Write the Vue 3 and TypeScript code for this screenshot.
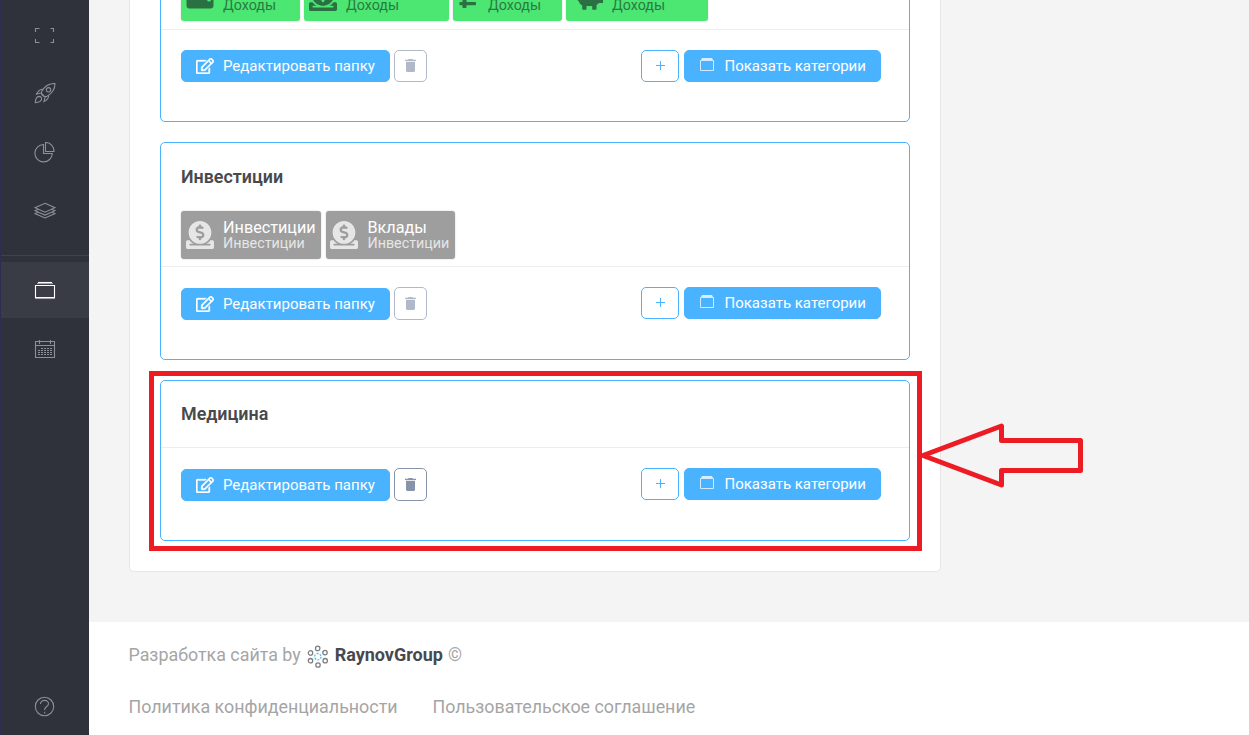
<script setup lang="ts">
interface Chip {
  title?: string
  group: string
  icon: 'wallet' | 'donate' | 'ruble' | 'piggy'
  width: number
}

interface Folder {
  id: string
  title?: string
  tone: 'green' | 'gray'
  chips: Chip[]
}

const folders: Folder[] = [
  {
    id: 'income',
    tone: 'green',
    chips: [
      { group: 'Доходы', icon: 'wallet', width: 119 },
      { group: 'Доходы', icon: 'donate', width: 145 },
      { group: 'Доходы', icon: 'ruble', width: 109 },
      { group: 'Доходы', icon: 'piggy', width: 142 },
    ],
  },
  {
    id: 'invest',
    title: 'Инвестиции',
    tone: 'gray',
    chips: [
      { title: 'Инвестиции', group: 'Инвестиции', icon: 'donate', width: 140 },
      { title: 'Вклады', group: 'Инвестиции', icon: 'donate', width: 129 },
    ],
  },
  { id: 'medicine', title: 'Медицина', tone: 'gray', chips: [] },
]

const donatePath =
  'M256 416c114.9 0 208-93.1 208-208S370.9 0 256 0 48 93.1 48 208s93.1 208 208 208zM233.8 97.4V80.6c0-9.2 7.4-16.6 16.6-16.6h11.1c9.2 0 16.6 7.4 16.6 16.6v17c15.5.8 30.5 6.1 43 15.4 5.6 4.1 6.2 12.3 1.2 17.1L306 145.6c-3.8 3.7-9.5 3.8-14 1-5.4-3.4-11.4-5.1-17.8-5.1h-38.9c-9 0-16.3 8.2-16.3 18.3 0 8.2 5 15.5 12.1 17.6l62.3 18.7c25.7 7.7 43.7 32.4 43.7 60.1 0 34-26.4 61.5-59.1 62.4v16.8c0 9.2-7.4 16.6-16.6 16.6h-11.1c-9.2 0-16.6-7.4-16.6-16.6v-17c-15.5-.8-30.5-6.1-43-15.4-5.6-4.1-6.2-12.3-1.2-17.1l16.3-15.5c3.8-3.7 9.5-3.8 14-1 5.4 3.4 11.4 5.1 17.8 5.1h38.9c9 0 16.3-8.2 16.3-18.3 0-8.2-5-15.5-12.1-17.6l-62.3-18.7c-25.7-7.7-43.7-32.4-43.7-60.1.1-34 26.4-61.5 59.1-62.4zM480 352h-32.500c-19.600 26-44.600 47.700-73 64h63.800c5.300 0 9.600 3.600 9.600 8v16c0 4.400-4.300 8-9.600 8H73.600c-5.300 0-9.600-3.600-9.600-8v-16c0-4.400 4.300-8 9.600-8h63.800c-28.400-16.300-53.300-38-73-64H32c-17.700 0-32 12.500-32 28v104c0 15.500 14.300 28 32 28h448c17.700 0 32-12.500 32-28V380c0-15.500-14.300-28-32-28z'
const editPath =
  'M402.3 344.9l32-32c5-5 13.7-1.5 13.7 5.7V464c0 26.5-21.5 48-48 48H48c-26.5 0-48-21.5-48-48V112c0-26.5 21.5-48 48-48h273.5c7.1 0 10.7 8.6 5.7 13.7l-32 32c-1.5 1.5-3.5 2.3-5.7 2.3H48v352h352V350.5c0-2.1.8-4.1 2.3-5.6zm156.6-201.8L296.3 405.7l-90.4 10c-26.2 2.9-48.5-19.2-45.6-45.6l10-90.4L432.9 17.1c22.9-22.9 59.9-22.9 82.7 0l43.2 43.2c22.9 22.9 22.9 60 .1 82.8zM460.1 174L402 115.9 216.2 301.8l-7.3 65.3 65.3-7.3L460.1 174zm64.8-79.7l-43.2-43.2c-4.1-4.1-10.8-4.1-14.8 0L436 82l58.1 58.1 30.9-30.9c4-4.2 4-10.8-.1-14.9z'
</script>

<template>
  <div class="app">
    <nav class="sidebar">
      <a class="nav-item">
        <svg width="22" height="22" viewBox="0 0 22 22">
          <path d="M1.500 8V4.500H5.500M16.500 4.500H19.500V8M1.500 15V18.500H5.500M16.500 18.500H19.500V15" />
        </svg>
      </a>
      <a class="nav-item">
        <svg width="22" height="22" viewBox="0 1 22 22">
          <path d="M21 1.500C14 1.500 10.500 4 7.800 9.300C7.300 10.500 7.400 11.300 8 12L10.200 14.200C11 14.800 11.800 14.800 12.600 14.400C18 11.500 21 8 21 1.500Z" />
          <circle cx="14.500" cy="7.800" r="2.200" />
          <path d="M8.800 7.200C5.500 7.200 4 9 2.400 12.200L7.600 10.800M14.800 13.200C14.800 16.500 13 18 10 19.600L11.200 14.600M7.400 12C8 12.900 9 14 10.200 14.600" />
          <path d="M1.300 20.700C1.500 17.500 2.200 14.500 5 14.400C7 14.400 8 15.800 7.600 17.200C7 19.800 4.300 20.600 1.300 20.700Z" />
        </svg>
      </a>
      <a class="nav-item">
        <svg width="22" height="22" viewBox="0 1 22 22">
          <path d="M9.500 3.500V12.500H18.300A8.700 8.700 0 1 1 9.500 3.500Z" />
          <path d="M11.500 1.500V10.500H20A8.500 8.700 0 0 0 11.500 1.500Z" />
        </svg>
      </a>
      <a class="nav-item">
        <svg width="22" height="22" viewBox="0 1 22 22">
          <path d="M11 3.300L21 7.700L11 12.200L1 7.700ZM4 9.400L1 10.700L11 15.100L21 10.700L18 9.400M4 12.300L1 13.600L11 18L21 13.600L18 12.300" />
        </svg>
      </a>
      <div class="nav-rule"></div>
      <a class="nav-item active">
        <svg width="22" height="22" viewBox="0 0 22 22">
          <path d="M4 3.500H18" />
          <path class="soft" d="M3 4.500H19" />
          <path d="M1.500 6.500H20.500V18.500H1.500Z" />
          <path class="soft" d="M1 19.500H21" />
        </svg>
      </a>
      <a class="nav-item">
        <svg width="22" height="22" viewBox="0 0 22 22">
          <path d="M1.500 3.500H20.500V19.500H1.500ZM1.500 7.500H20.500M5.500 2V6M16.500 2V6" />
          <path d="M7 10.500H18M4 12.500H18M4 14.500H18M4 16.500H18" stroke-dasharray="2 1" />
        </svg>
      </a>
      <a class="nav-item help">
        <svg width="22" height="22" viewBox="0 0 22 22">
          <circle cx="10.500" cy="11.500" r="9.200" />
          <path d="M6.500 9C6.500 6.600 8.200 5.400 10.600 5.400C13 5.400 14.500 6.700 14.500 8.700C14.500 11.700 10.600 11.400 10.600 14.900M10.600 16.700V18.400" />
        </svg>
      </a>
    </nav>

    <div class="page">
      <main class="content">
        <section class="panel">
          <article v-for="folder in folders" :key="folder.id" class="folder" :class="folder.id">
            <div class="folder-body">
              <h2>{{ folder.title }}</h2>
              <div v-if="folder.chips.length" class="chips" :class="folder.tone">
                <div v-for="(chip, i) in folder.chips" :key="i" class="chip" :style="{ width: chip.width + 'px' }">
                  <svg v-if="chip.icon === 'donate'" class="chip-icon" viewBox="0 0 512 512"><path :d="donatePath" /></svg>
                  <svg v-else-if="chip.icon === 'wallet'" class="chip-icon" viewBox="0 0 28 28">
                    <path fill-rule="evenodd" d="M3 2H23Q25 2 25 5H5V6H25Q27.500 6 27.500 9V22.500Q27.500 25.500 24.500 25.500H3.500Q.5 25.500 .5 22.500V5Q.5 2 3 2ZM23 14.500a2 2 0 1 0 0 4a2 2 0 1 0 0-4Z" />
                  </svg>
                  <svg v-else-if="chip.icon === 'ruble'" class="chip-icon narrow" viewBox="0 0 21 28">
                    <path fill-rule="evenodd" d="M4.500 1H12Q19 1 19 8.500Q19 16 12 16H8.500V19H17Q18 19 18 19.800V21.400Q18 22.200 17 22.200H8.500V24.200Q8.500 25 7.700 25H5.200Q4.400 25 4.400 24.200V22.200H2.200Q1.400 22.200 1.400 21.400V19.800Q1.400 19 2.200 19H4.500ZM8.500 4.500V12.500H12Q15 12.500 15 8.500Q15 4.500 12 4.500Z" />
                  </svg>
                  <svg v-else class="chip-icon wide" viewBox="0 0 32 28">
                    <path d="M14 6H22L27 3V8L30 12H32V20H28L25.500 22V26Q25.500 26.800 24.700 26.800H22Q21.200 26.800 21.200 26V23H15.500V26Q15.500 26.800 14.700 26.800H12Q11.200 26.800 11.200 26V22.500Q8.500 21 7.500 18L4 15L7 12Q8 7 14 6Z" />
                  </svg>
                  <div class="chip-text">
                    <span class="chip-title">{{ chip.title }}</span>
                    <span class="chip-group">{{ chip.group }}</span>
                  </div>
                </div>
              </div>
            </div>
            <div class="folder-actions">
              <button class="btn edit">
                <svg width="18" height="16" viewBox="0 0 576 512"><path :d="editPath" /></svg>
                <span>Редактировать папку</span>
              </button>
              <button class="btn trash" aria-label="Удалить">
                <svg width="11" height="13" viewBox="0 0 11 13">
                  <path d="M3.500 0H7.500L8 .7H11V2H0V.7H3ZM1 2.700H10V11.500Q10 13 8.500 13H2.500Q1 13 1 11.500Z" />
                </svg>
              </button>
              <div class="spacer"></div>
              <button class="btn plus" aria-label="Добавить">
                <svg width="10" height="9" viewBox="0 0 10 9"><path d="M5.500 0V9M1 4.500H10" /></svg>
              </button>
              <button class="btn show">
                <svg width="14" height="14" viewBox="0 0 14 14">
                  <path class="lid" d="M2 0H12L13.500 3H.5Z" />
                  <path class="box" d="M.5 2.500H13.500V12.500H.5Z" />
                </svg>
                <span>Показать категории</span>
              </button>
            </div>
          </article>
        </section>
      </main>

      <footer class="footer">
        <div class="credit">
          <span>Разработка сайта by</span>
          <svg class="brand-logo" width="22" height="24" viewBox="0 0 22 24">
            <g class="ring">
              <circle cx="10.700" cy="3.400" r="2.200" />
              <circle cx="18" cy="7.600" r="2.200" />
              <circle cx="18.200" cy="15.700" r="2.200" />
              <circle cx="11" cy="20" r="2.200" />
              <circle cx="3.500" cy="15.700" r="2.200" />
              <circle cx="3.500" cy="7.900" r="2.200" />
            </g>
            <circle class="core" cx="10.800" cy="11.700" r="3.200" />
          </svg>
          <strong>RaynovGroup</strong>
          <span class="copy">©</span>
        </div>
        <div class="links">
          <a>Политика конфиденциальности</a>
          <a>Пользовательское соглашение</a>
        </div>
      </footer>
    </div>

    <div class="highlight"></div>
    <svg class="arrow" width="166" height="70" viewBox="0 0 166 70">
      <path d="M5 35.500L83.500 6V20.500H162.500V50.500H83.500V65Z" />
    </svg>
  </div>
</template>

<style>
body {
  margin: 0;
  overflow: hidden;
}
</style>

<style scoped>
.app {
  position: relative;
  display: flex;
  width: 1249px;
  height: 735px;
  overflow: hidden;
  background: #f4f4f4;
  font-family: Roboto, "Liberation Sans", sans-serif;
}

.sidebar {
  box-sizing: border-box;
  display: flex;
  flex-direction: column;
  gap: 3px;
  width: 89px;
  height: 735px;
  padding: 7px 0 1px;
  border-left: 1px solid #2d2c53;
  background: #30323b;
}
.nav-item {
  display: flex;
  flex: none;
  align-items: center;
  justify-content: center;
  height: 56px;
}
.nav-item svg {
  fill: none;
  stroke: #8b8f96;
  stroke-width: 1.100;
}
.nav-item.active {
  background: #3a3c45;
}
.nav-item.active svg {
  stroke: #fff;
}
.nav-item .soft {
  stroke: #a5a6ab;
}
.nav-rule {
  height: 1px;
  margin: 12px 0 3px;
  background: #41434b;
}
.nav-item.help {
  margin-top: auto;
}

.page {
  display: flex;
  flex: 1;
  flex-direction: column;
}
.content {
  box-sizing: border-box;
  display: flex;
  flex-direction: column;
  justify-content: flex-end;
  height: 622px;
  padding: 0 0 50px 40px;
}
.panel {
  box-sizing: border-box;
  display: flex;
  flex: none;
  flex-direction: column;
  gap: 20px;
  width: 812px;
  padding: 30px;
  border: 1px solid #e6e6e6;
  border-radius: 5px;
  background: #fff;
}
.folder {
  box-sizing: border-box;
  height: 218px;
  border: 1px solid #4ab3ff;
  border-radius: 5px;
}
.folder.medicine {
  height: 161px;
}
.folder-body {
  box-sizing: border-box;
  height: 124px;
  padding: 22px 20px 0;
  border-bottom: 1px solid #ededed;
}
.income .folder-body {
  height: 125px;
}
.medicine .folder-body {
  height: 67px;
}
h2 {
  height: 24px;
  margin: 0;
  color: #48494d;
  font-size: 17.900px;
  font-weight: 600;
  line-height: 24px;
}
.medicine h2 {
  line-height: 22px;
}
.chips {
  display: flex;
  gap: 4px;
  margin-top: 22px;
}
.chips.gray {
  gap: 5px;
}
.chip {
  box-sizing: border-box;
  display: flex;
  flex: none;
  align-items: center;
  gap: 9.500px;
  height: 48px;
  padding-left: 4.500px;
  border-radius: 3px;
  box-shadow: 0 0 2px rgba(0, 0, 0, 0.2);
}
.green .chip {
  background: #4ce673;
  color: #2b7a42;
}
.gray .chip {
  background: #9e9e9e;
  color: #fff;
}
.gray .chip + .chip {
  padding-left: 4px;
}
.chip-icon {
  flex: none;
  width: 28px;
  height: 28px;
  fill: #e6e6e6;
}
.chip-icon.narrow {
  width: 21px;
}
.chip-icon.wide {
  width: 32px;
}
.green .chip-icon {
  fill: #2a7042;
}
.chip-text {
  display: flex;
  flex-direction: column;
  padding-bottom: 1px;
}
.chip-title {
  height: 17px;
  font-size: 16.200px;
  line-height: 17px;
}
.chip-group {
  height: 15px;
  font-size: 14.300px;
  line-height: 15px;
}
.gray .chip-group {
  color: #e6e6e6;
}

.folder-actions {
  display: flex;
  align-items: flex-start;
  padding: 20px 28px 0 20px;
}
.btn {
  box-sizing: border-box;
  display: flex;
  flex: none;
  align-items: center;
  height: 32px;
  margin: 0;
  padding: 0;
  border: 1px solid #4ab3ff;
  border-radius: 5px;
  background: #4ab3ff;
  color: #fff;
  font-family: inherit;
  font-size: 15px;
  white-space: nowrap;
}
.edit {
  gap: 9.500px;
  width: 209px;
  padding-left: 13.500px;
}
.edit svg {
  margin-bottom: 1px;
  fill: #fff;
  stroke: #fff;
  stroke-width: 10;
}
.invest .edit,
.medicine .edit {
  margin-top: 1px;
}
.trash {
  justify-content: center;
  width: 33px;
  margin-left: 4px;
  border-color: #b1b9c8;
  background: #fff;
}
.trash svg {
  margin-bottom: 1px;
}
.invest .trash,
.medicine .trash {
  height: 33px;
}
.trash svg {
  fill: #b1b9c8;
}
.medicine .trash {
  border-color: #8793ab;
}
.medicine .trash svg {
  fill: #8793ab;
}
.spacer {
  flex: 1;
}
.plus {
  justify-content: center;
  width: 38px;
  margin-right: 5px;
  background: #fff;
}
.plus svg {
  margin-bottom: 1px;
  fill: none;
  stroke: #4ab3ff;
}
.show {
  gap: 10.500px;
  width: 197px;
  padding-left: 15px;
}
.show svg {
  margin-bottom: 2px;
}
.show .lid {
  fill: #d8eeff;
}
.show .box {
  fill: none;
  stroke: #d0eaff;
}

.footer {
  display: flex;
  flex: 1;
  flex-direction: column;
  padding: 20px 0 0 39.500px;
  background: #fff;
  color: #a5a5a5;
  font-size: 17.850px;
}
.credit {
  display: flex;
  align-items: center;
  height: 24px;
}
.brand-logo {
  flex: none;
  margin: 5px 6px 0 6px;
}
.ring {
  fill: none;
  stroke: #808080;
  stroke-width: 1.300;
}
.core {
  fill: none;
  stroke: #4ab9ff;
  stroke-width: 1.300;
  stroke-dasharray: 2 1.350;
}
strong {
  color: #48494d;
  font-size: 18px;
  font-weight: 700;
}
.copy {
  margin-left: 5px;
}
.links {
  display: flex;
  gap: 35px;
  height: 24px;
  margin-top: 29px;
  line-height: 24px;
}

.highlight {
  position: absolute;
  top: 371px;
  left: 149px;
  box-sizing: border-box;
  width: 773px;
  height: 180px;
  border: 5px solid #ed1c24;
}
.arrow {
  position: absolute;
  top: 420px;
  left: 918px;
  fill: none;
  stroke: #ed1c24;
  stroke-width: 5;
  stroke-linejoin: round;
}
</style>
